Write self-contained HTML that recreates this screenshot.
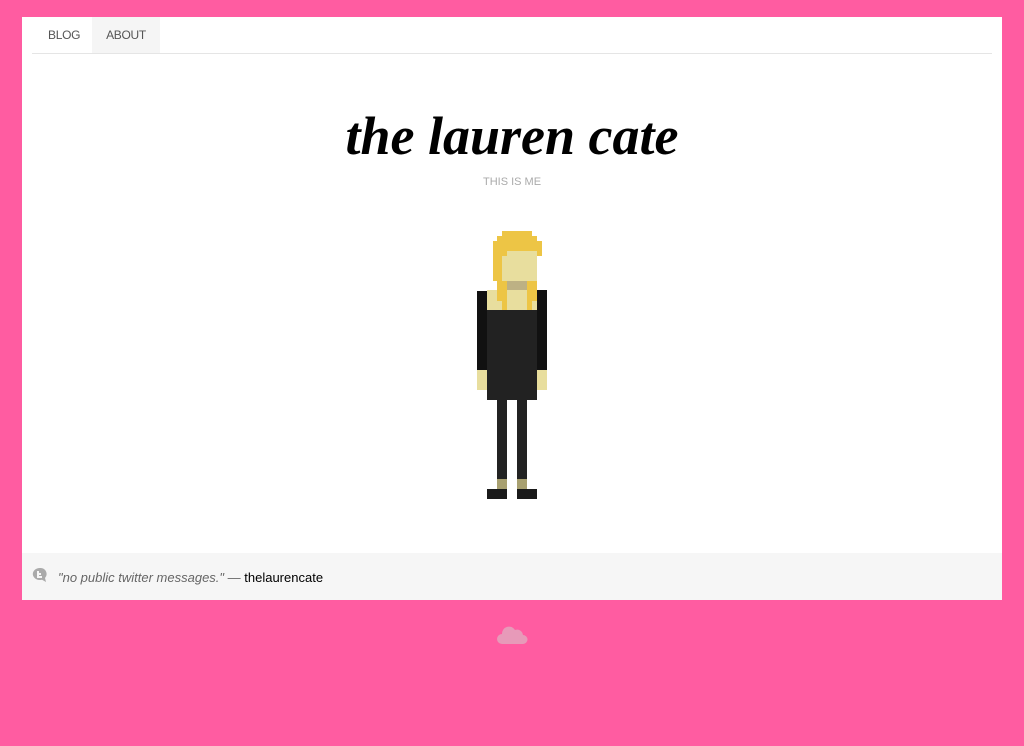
<!DOCTYPE html>
<html><head><meta charset="utf-8"><style>
body{margin:0;background:#ff5ca1;width:1024px;height:746px;position:relative;overflow:hidden;font-family:"Liberation Sans",sans-serif}
.panel{position:absolute;left:22px;top:17px;width:980px;height:583px;background:#fff}
.nav{position:absolute;left:10px;top:0;width:960px;height:36px;border-bottom:1px solid #e5e5e5}
.nav span{position:absolute;top:0;height:36px;line-height:36px;font-size:12px;color:#555;letter-spacing:-0.3px}
.title{position:absolute;left:0;width:980px;top:88px;text-align:center;font-family:"Liberation Serif",serif;font-style:italic;font-weight:bold;font-size:54px;color:#000}
.sub{position:absolute;left:0;width:980px;top:159px;text-align:center;font-size:11px;color:#aaa}
.foot{position:absolute;left:0;top:536px;width:980px;height:47px;background:#f6f6f6}
.p{position:absolute}
</style></head><body>
<div class="panel">
<div class="nav"><span style="left:16px">BLOG</span><span style="left:60px;width:68px;background:#f5f5f5;text-align:center">ABOUT</span></div>
<div class="title">the lauren cate</div>
<div class="sub">THIS IS ME</div>
<div class="foot">
<svg class="p" style="left:10px;top:14px" width="16" height="16" viewBox="0 0 16 16"><path d="M8 1a7 6 0 1 0 2 11.7L14 15l-1-4A6 6 0 0 0 8 1z" fill="#aaa"/><path d="M6 4v6h4M6 7h3" stroke="#f6f6f6" stroke-width="2" fill="none"/></svg>
<div class="p" style="left:36px;top:17px;font-size:13px;color:#666"><i>"no public twitter messages."</i> — <span style="color:#000">thelaurencate</span></div>
</div>
</div>
<div style="position:absolute;left:0;top:0">
<div class="p" style="left:502px;top:231px;width:30px;height:5px;background:#edc545"></div>
<div class="p" style="left:497px;top:236px;width:40px;height:5px;background:#edc545"></div>
<div class="p" style="left:493px;top:241px;width:49px;height:15px;background:#edc545"></div>
<div class="p" style="left:502px;top:251px;width:35px;height:30px;background:#e8de9e"></div>
<div class="p" style="left:502px;top:251px;width:5px;height:5px;background:#edc545"></div>
<div class="p" style="left:493px;top:256px;width:9px;height:25px;background:#edc545"></div>
<div class="p" style="left:487px;top:290px;width:50px;height:20px;background:#e8de9e"></div>
<div class="p" style="left:507px;top:281px;width:20px;height:9px;background:#bdb184"></div>
<div class="p" style="left:497px;top:281px;width:10px;height:20px;background:#edc545"></div>
<div class="p" style="left:502px;top:301px;width:5px;height:20px;background:#edc545"></div>
<div class="p" style="left:527px;top:281px;width:10px;height:20px;background:#edc545"></div>
<div class="p" style="left:527px;top:301px;width:5px;height:20px;background:#edc545"></div>
<div class="p" style="left:477px;top:291px;width:10px;height:79px;background:#111"></div>
<div class="p" style="left:537px;top:290px;width:10px;height:80px;background:#111"></div>
<div class="p" style="left:477px;top:370px;width:10px;height:20px;background:#e8de9e"></div>
<div class="p" style="left:537px;top:370px;width:10px;height:20px;background:#e8de9e"></div>
<div class="p" style="left:487px;top:310px;width:50px;height:90px;background:#222"></div>
<div class="p" style="left:497px;top:400px;width:10px;height:79px;background:#222"></div>
<div class="p" style="left:517px;top:400px;width:10px;height:79px;background:#222"></div>
<div class="p" style="left:497px;top:479px;width:10px;height:10px;background:#a8a070"></div>
<div class="p" style="left:517px;top:479px;width:10px;height:10px;background:#a8a070"></div>
<div class="p" style="left:487px;top:489px;width:20px;height:10px;background:#1a1a1a"></div>
<div class="p" style="left:517px;top:489px;width:20px;height:10px;background:#1a1a1a"></div>
</div>
<svg class="p" style="left:497px;top:625px" width="31" height="20" viewBox="0 0 31 20"><path d="M5 19a5 5 0 0 1 0-10a7 7 0 0 1 13-4a6 6 0 0 1 8 5a4.5 4.5 0 0 1 0 9z" fill="#e79ab9"/></svg>
</body></html>
